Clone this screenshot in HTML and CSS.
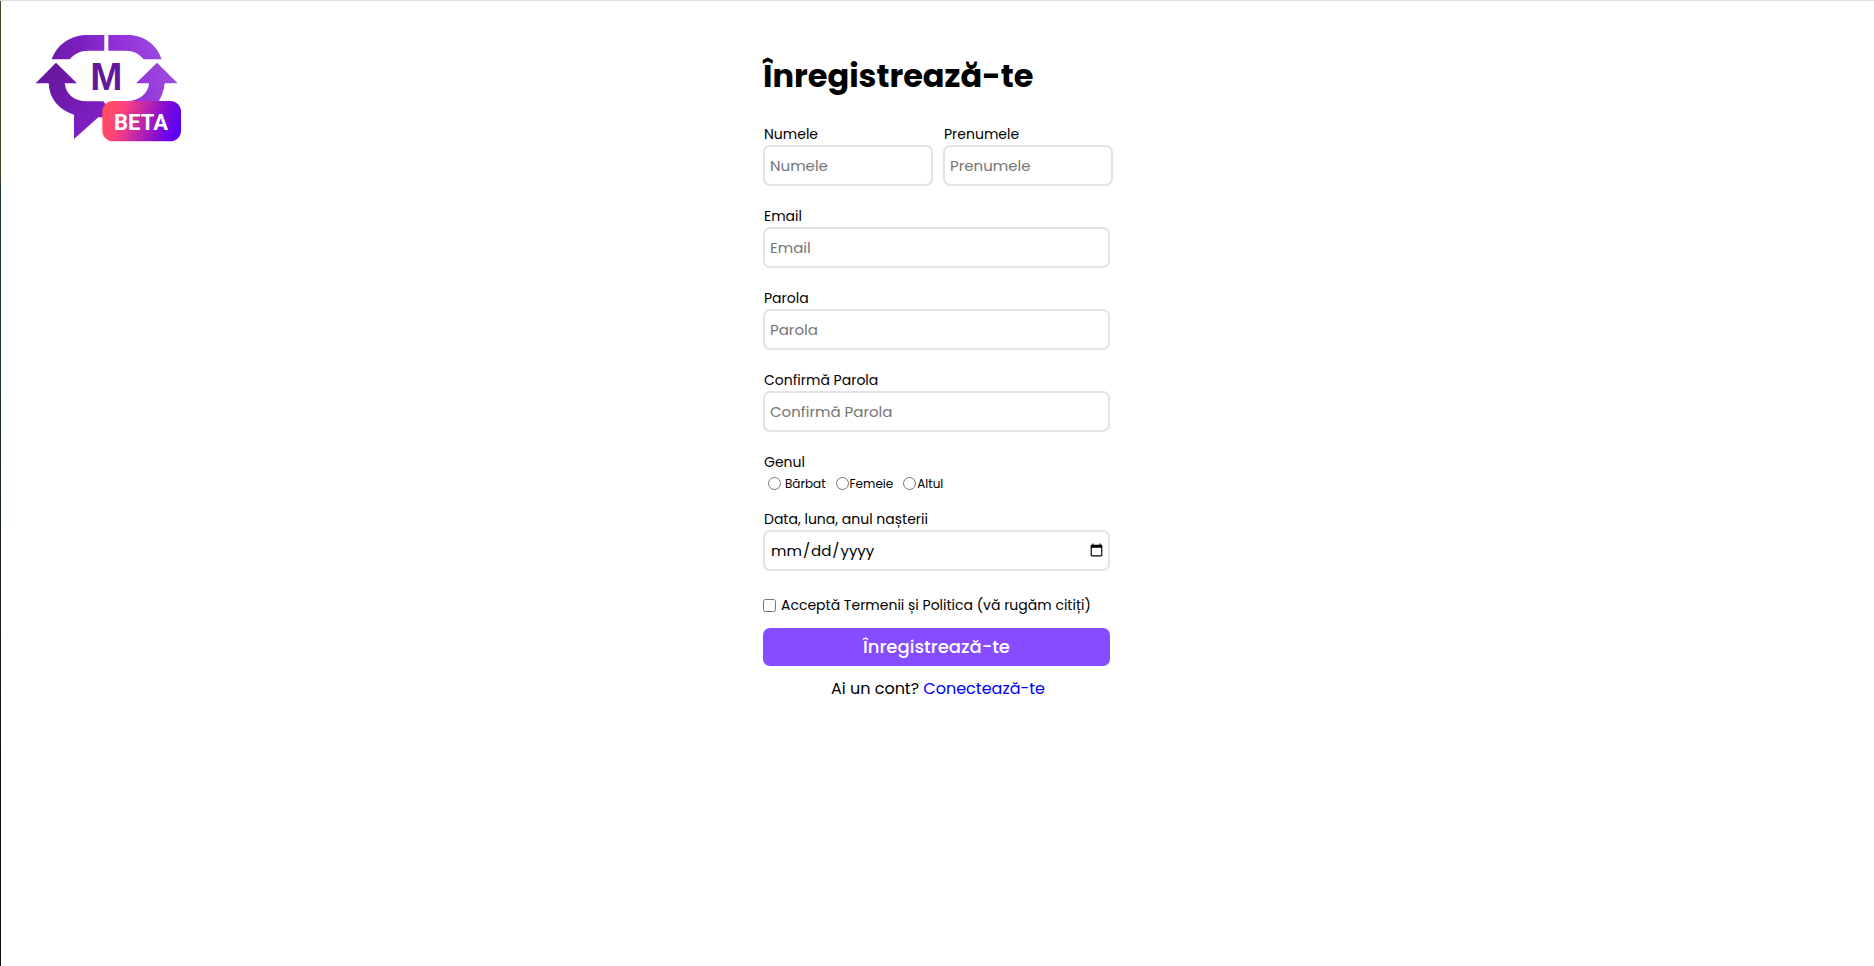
FILE: index.html
```html
<!DOCTYPE html>
<html lang="ro">
<head>
<meta charset="utf-8">
<meta name="viewport" content="width=device-width, initial-scale=1">
<title>Înregistrează-te</title>
<link rel="stylesheet" href="styles.css">
</head>
<body class="page">
<header class="brand">
<svg class="logo" viewBox="45 41 438 324" role="img" aria-label="M Beta">
<defs>
<linearGradient id="mark" gradientUnits="userSpaceOnUse" x1="60" y1="240" x2="450" y2="130">
<stop offset="0" stop-color="#64159a"/><stop offset="0.4" stop-color="#7c1fc0"/><stop offset="0.7" stop-color="#9433da"/><stop offset="1" stop-color="#9c4ce0"/>
</linearGradient>
<linearGradient id="arrow" gradientUnits="userSpaceOnUse" x1="60" y1="150" x2="250" y2="310">
<stop offset="0" stop-color="#64159a"/><stop offset="1" stop-color="#8221c8"/>
</linearGradient>
<linearGradient id="badge" gradientUnits="userSpaceOnUse" x1="255" y1="270" x2="475" y2="335">
<stop offset="0" stop-color="#ff4d63"/><stop offset="0.22" stop-color="#ff437a"/><stop offset="0.8" stop-color="#7a08dc"/><stop offset="1" stop-color="#5a00fa"/>
</linearGradient>
</defs>
<path fill="url(#mark)" d="M95 117C110 74 151 44 202 44H253V91H205C181 91 163 100 149 117ZM265 44H325C371 44 411 73 425 117H371C358 100 342 91 315 91H265Z"/>
<path fill="url(#mark)" d="M411 127L473 189H434C432 212 424 232 412 250H320V243C361 241 384 220 387 189H348Z"/>
<path fill="url(#arrow)" d="M108 127L171 189H134C138 224 165 243 200 243H250L256 250V291H235L162 356V283C115 268 88 235 86 189H47Z"/>
<text class="logo-m" x="259" y="210" fill="#64179f">M</text>
<rect x="247" y="242" width="236" height="121" rx="32" fill="url(#badge)"/>
<text class="logo-beta" x="363" y="329">BETA</text>
</svg>
</header>
<main class="content">
<form class="form">
<h1 class="title">Înregistrează-te</h1>
<div class="names">
<div class="field"><label class="label" for="last">Numele</label><input class="input" id="last" type="text" placeholder="Numele"></div>
<div class="field"><label class="label" for="first">Prenumele</label><input class="input" id="first" type="text" placeholder="Prenumele"></div>
</div>
<div class="field"><label class="label" for="email">Email</label><input class="input" id="email" type="email" placeholder="Email"></div>
<div class="field"><label class="label" for="pass">Parola</label><input class="input" id="pass" type="password" placeholder="Parola"></div>
<div class="field"><label class="label" for="confirm">Confirmă Parola</label><input class="input" id="confirm" type="password" placeholder="Confirmă Parola"></div>
<fieldset class="gender">
<legend class="label">Genul</legend>
<div class="options">
<label class="option option-first"><input class="radio" type="radio" name="gender">Bărbat</label>
<label class="option"><input class="radio" type="radio" name="gender">Femeie</label>
<label class="option"><input class="radio" type="radio" name="gender">Altul</label>
</div>
</fieldset>
<div class="field"><label class="label" for="birth">Data, luna, anul nașterii</label><input class="input input-date" id="birth" type="date"></div>
<label class="terms"><input class="check" type="checkbox">Acceptă Termenii și Politica (vă rugăm citiți)</label>
<button class="submit" type="submit">Înregistrează-te</button>
<p class="signin">Ai un cont? <a class="link" href="#">Conectează-te</a></p>
</form>
</main>
</body>
</html>
```

FILE: styles.css
```css
* { box-sizing: border-box; }

.page {
  margin: 0;
  min-height: 100vh;
  display: grid;
  grid-template-columns: 1fr minmax(0, 348px) 1fr;
  border-top: 1px solid #e0e0e0;
  background: linear-gradient(#45462f 0, #45462f 180px, #1f3530 185px, #1f3530 40%, #0c0f16 80%) left / 1px 100% no-repeat #fff;
  color: #000;
  font-family: Poppins, Inter, "Open Sans", sans-serif;
}

.brand { padding: 33px 0 0 35px; }
.logo { display: block; width: 146px; height: auto; }
.logo-m { font-family: "Liberation Sans", Arial, sans-serif; font-size: 116px; font-weight: 700; text-anchor: middle; }
.logo-beta { font-family: Roboto, sans-serif; font-size: 66px; font-weight: 700; text-anchor: middle; fill: #fff; }

.content { padding: 51px 1px 0 0; }
.title { margin: 0 0 24px; font-size: 32px; line-height: 48px; font-weight: 700; white-space: nowrap; }

.names { display: grid; grid-template-columns: 170px 170px; gap: 10px; }
.field { margin-bottom: 20px; }
.label { display: block; padding: 0 1px; font-size: 14px; line-height: 21px; }
.input {
  display: block;
  width: 100%;
  height: 41px;
  padding: 0 5px;
  border: 2px solid #e3e2e9;
  border-radius: 7px;
  background: #fff;
  color: #000;
  font-family: inherit;
  font-size: 15px;
}
.input-date { padding-right: 2px; }
.input::placeholder { color: #757575; }

.gender { margin: 0 0 15px; padding: 0; border: 0; }
.gender .label { padding: 0 1px; }
.options { display: flex; gap: 10px; padding-left: 5px; }
.option { display: flex; align-items: center; gap: 1px; font-size: 12px; line-height: 21px; }
.option-first { gap: 4px; }
.radio { width: 13px; height: 13px; margin: 0; }

.terms { display: flex; align-items: center; gap: 5px; margin-top: 24px; font-size: 14px; line-height: 21px; white-space: nowrap; }
.check { width: 13px; height: 13px; margin: 0; }

.submit {
  display: block;
  width: 100%;
  height: 38px;
  margin-top: 12px;
  padding: 0 0 1px;
  border: 0;
  border-radius: 7px;
  background: #864cff;
  color: #fff;
  font-family: inherit;
  font-size: 18px;
  font-weight: 500;
}
.signin { margin: 11px 0 0; padding-left: 3px; font-size: 16px; line-height: 24px; text-align: center; }
.link { color: #00f; text-decoration: none; }
```
